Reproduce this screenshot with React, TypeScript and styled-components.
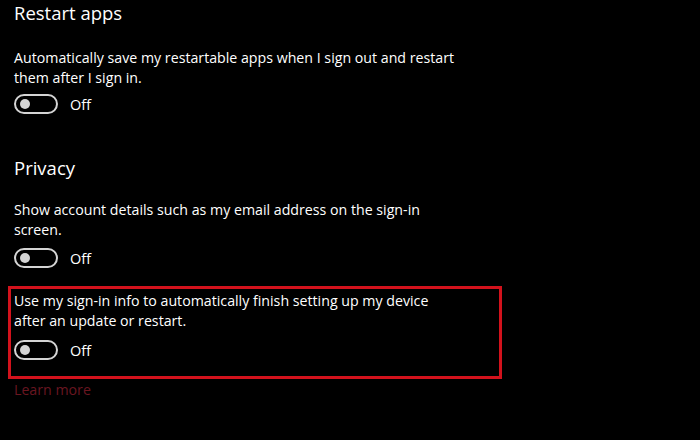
import styled, { createGlobalStyle } from "styled-components";

const GlobalStyle = createGlobalStyle`
  html, body {
    margin: 0;
    background: #000;
  }
  body {
    font-family: "Open Sans", "Noto Sans", sans-serif;
    color: #fff;
  }
`;

const Page = styled.div`
  width: 700px;
  height: 440px;
  box-sizing: border-box;
  padding: 0 0 0 14px;
  background: #000;
  overflow: hidden;
`;

const Heading = styled.h2<{ top: number }>`
  margin: ${(p) => p.top}px 0 0;
  font-size: 18.5px;
  font-weight: 400;
  line-height: 26px;
  color: #fff;
`;

const Setting = styled.div<{ top: number }>`
  margin-top: ${(p) => p.top}px;
`;

const Description = styled.p`
  margin: 0;
  width: 446px;
  font-size: 14.2px;
  line-height: 20px;
  color: #fff;
`;

const ToggleRow = styled.div<{ gap: number }>`
  display: flex;
  align-items: center;
  gap: 12px;
  margin-top: ${(p) => p.gap}px;
  height: 20px;
`;

const Track = styled.span`
  display: flex;
  align-items: center;
  box-sizing: border-box;
  width: 44px;
  height: 20px;
  border: 2px solid #d4d4d4;
  border-radius: 10px;
  padding-left: 4px;
`;

const Knob = styled.span`
  width: 10px;
  height: 10px;
  border-radius: 50%;
  background: #d4d4d4;
`;

const State = styled.span`
  font-size: 14.5px;
  color: #fff;
`;

const Highlight = styled.div`
  margin: 18px 0 0 -6px;
  width: 494px;
  box-sizing: border-box;
  border: 3px solid #d2121c;
  padding: 2px 0 16px 3px;
`;

const LearnMore = styled.a`
  display: block;
  margin-top: 1px;
  font-size: 14.2px;
  line-height: 20px;
  color: #6a1620;
  text-decoration: none;
`;

function Toggle({ gap }: { gap: number }) {
  return (
    <ToggleRow gap={gap}>
      <Track>
        <Knob />
      </Track>
      <State>Off</State>
    </ToggleRow>
  );
}

export default function App() {
  return (
    <>
      <GlobalStyle />
      <Page>
        <Heading top={0}>Restart apps</Heading>
        <Setting top={22}>
          <Description>
            Automatically save my restartable apps when I sign out and restart
            them after I sign in.
          </Description>
          <Toggle gap={6} />
        </Setting>
        <Heading top={41}>Privacy</Heading>
        <Setting top={19}>
          <Description>
            Show account details such as my email address on the sign-in
            screen.
          </Description>
          <Toggle gap={8} />
        </Setting>
        <Highlight>
          <Description>
            Use my sign-in info to automatically finish setting up my device
            after an update or restart.
          </Description>
          <Toggle gap={9} />
        </Highlight>
        <LearnMore href="#">Learn more</LearnMore>
      </Page>
    </>
  );
}
